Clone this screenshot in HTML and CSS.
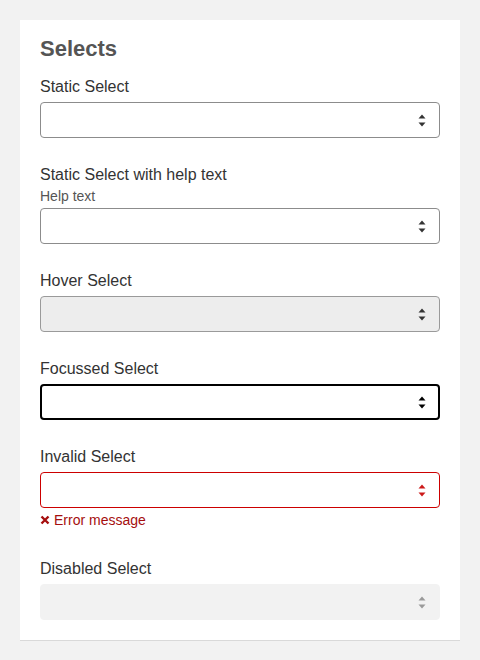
FILE: index.html
```html
<!DOCTYPE html>
<html lang="en">
<head>
    <meta charset="UTF-8">
    <meta name="viewport" content="width=device-width, initial-scale=1.0">
    <title>Selects</title>
    <link rel="stylesheet" href="styles.css">
</head>
<body>
    <main class="card">
        <h2>Selects</h2>

        <div class="field">
            <label for="static">Static Select</label>
            <div class="select-wrap">
                <select id="static"><option></option></select>
                <svg class="arrows" width="8" height="13" viewBox="0 0 8 13"><polygon points="0.5,4.5 4,0.5 7.5,4.5"/><polygon points="0.5,8.5 4,12.5 7.5,8.5"/></svg>
            </div>
        </div>

        <div class="field">
            <label for="help">Static Select with help text</label>
            <div class="help">Help text</div>
            <div class="select-wrap">
                <select id="help"><option></option></select>
                <svg class="arrows" width="8" height="13" viewBox="0 0 8 13"><polygon points="0.5,4.5 4,0.5 7.5,4.5"/><polygon points="0.5,8.5 4,12.5 7.5,8.5"/></svg>
            </div>
        </div>

        <div class="field">
            <label for="hover">Hover Select</label>
            <div class="select-wrap hover">
                <select id="hover"><option></option></select>
                <svg class="arrows" width="8" height="13" viewBox="0 0 8 13"><polygon points="0.5,4.5 4,0.5 7.5,4.5"/><polygon points="0.5,8.5 4,12.5 7.5,8.5"/></svg>
            </div>
        </div>

        <div class="field">
            <label for="focus">Focussed Select</label>
            <div class="select-wrap focus">
                <select id="focus"><option></option></select>
                <svg class="arrows" width="8" height="13" viewBox="0 0 8 13"><polygon points="0.5,4.5 4,0.5 7.5,4.5"/><polygon points="0.5,8.5 4,12.5 7.5,8.5"/></svg>
            </div>
        </div>

        <div class="field">
            <label for="invalid">Invalid Select</label>
            <div class="select-wrap invalid">
                <select id="invalid"><option></option></select>
                <svg class="arrows" width="8" height="13" viewBox="0 0 8 13"><polygon points="0.5,4.5 4,0.5 7.5,4.5"/><polygon points="0.5,8.5 4,12.5 7.5,8.5"/></svg>
            </div>
            <div class="error">
                <svg width="10" height="10" viewBox="0 0 10 10"><path d="M1.5 1.5 L8.5 8.5 M8.5 1.5 L1.5 8.5" stroke="currentColor" stroke-width="2.4"/></svg>
                Error message
            </div>
        </div>

        <div class="field">
            <label for="disabled">Disabled Select</label>
            <div class="select-wrap disabled">
                <select id="disabled" disabled><option></option></select>
                <svg class="arrows" width="8" height="13" viewBox="0 0 8 13"><polygon points="0.5,4.5 4,0.5 7.5,4.5"/><polygon points="0.5,8.5 4,12.5 7.5,8.5"/></svg>
            </div>
        </div>
    </main>
</body>
</html>
```
FILE: styles.css
```css
body {
    font-family: "Liberation Sans", Arial, sans-serif;
    margin: 0;
    padding: 20px 20px 0;
    background-color: #f2f2f2;
    color: #333;
}

.card {
    background: #fff;
    padding: 17px 20px 20px;
    border-bottom: 1px solid #d9d9d9;
}

.card h2 {
    margin: 0 0 13px;
    font-size: 22px;
    line-height: 24px;
    font-weight: 700;
    color: #555;
}

.field {
    display: flex;
    flex-direction: column;
    margin-bottom: 24px;
}

.field:last-child {
    margin-bottom: 0;
}

.field label {
    font-size: 16px;
    line-height: 26px;
    margin-bottom: 2px;
}

.help {
    font-size: 14px;
    line-height: 18px;
    color: #555;
    margin-top: -3px;
    margin-bottom: 3px;
}

.select-wrap {
    position: relative;
    color: #333;
}

.select-wrap select {
    display: block;
    width: 100%;
    height: 36px;
    margin: 0;
    padding: 0 30px 0 10px;
    box-sizing: border-box;
    appearance: none;
    -webkit-appearance: none;
    background: #fff;
    border: 1px solid #8c8c8c;
    border-radius: 4px;
    font-family: inherit;
    font-size: 16px;
    color: #333;
    outline: none;
}

.arrows {
    position: absolute;
    right: 14px;
    top: 12px;
    fill: currentColor;
    pointer-events: none;
}

.hover select {
    background: #ededed;
    border-color: #9a9a9a;
}

.focus {
    color: #000;
}

.focus select {
    border: 2px solid #000;
}

.invalid {
    color: #cc1a1a;
}

.invalid select {
    border-color: #cc0000;
}

.error {
    display: flex;
    align-items: center;
    gap: 4px;
    margin-top: 3px;
    margin-bottom: 3px;
    font-size: 14px;
    line-height: 18px;
    color: #a50e0e;
}

.disabled {
    color: #9a9a9a;
}

.disabled select {
    background: #ededed;
    border-color: #ededed;
}
```
